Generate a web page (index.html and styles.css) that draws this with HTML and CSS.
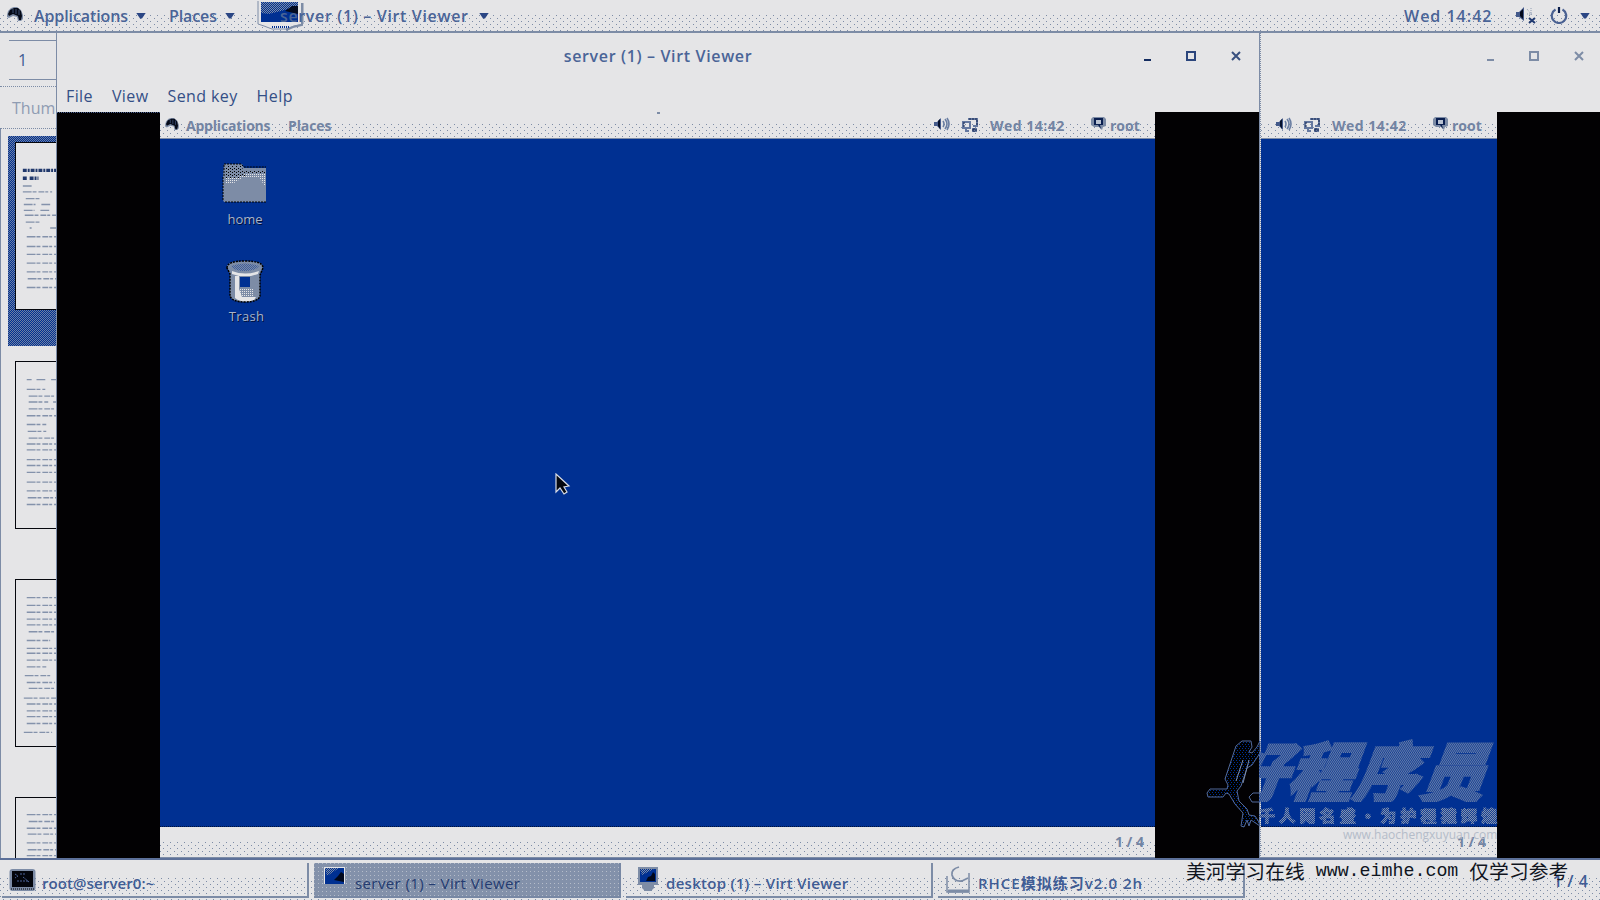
FILE: index.html
```html
<!DOCTYPE html>
<html lang="en">
<head>
<meta charset="utf-8">
<title>server (1) – Virt Viewer</title>
<link rel="stylesheet" href="styles.css">
</head>
<body>
<svg class="defs" width="0" height="0">
  <defs>
    <pattern id="weave" width="2" height="2" patternUnits="userSpaceOnUse"><rect width="2" height="2" fill="#003092"/><rect width="1" height="1" fill="#7d8ca6"/><rect x="1" y="1" width="1" height="1" fill="#7d8ca6"/></pattern>
    <pattern id="night" width="3" height="4" patternUnits="userSpaceOnUse"><rect width="3" height="4" fill="#000"/><rect width="1" height="1" fill="#003092"/><rect x="1" y="2" width="1" height="1" fill="#003092"/></pattern>
    <pattern id="frost" width="2" height="2" patternUnits="userSpaceOnUse"><rect width="1" height="1" fill="#e5e5e7"/></pattern>
    <pattern id="soot" width="4" height="3" patternUnits="userSpaceOnUse"><rect width="1" height="1" fill="#000"/><rect x="2" y="1" width="1" height="1" fill="#000"/></pattern>
    <symbol id="hat" viewBox="0 0 16 14"><path d="M0 8 1 4 4 1 7 0h3l4 3 2 5v4l-2 2h-3l-1-4-4-1-4 2-2-1z" fill="#7d8ca6"/><path d="M1 7 3 3 7 1h4l3 3 1 5-1 4h-2l-1-4-5-2-4 2z" fill="#050a18"/><path d="M6 2v4M9 2v5M12 3v5" stroke="#4a5f8a" stroke-width=".8"/></symbol>
    <symbol id="sound" viewBox="0 0 16 14"><path d="M0 5h3l4-4v12L3 9H0z" fill="#43598a"/><path d="M4 4l2-2v10L4 9z" fill="#05102c"/><path d="M9 4q2 3 0 6M11 2q4 5 0 10M13 1q4 6 0 12" fill="none" stroke="#6b7fa3" stroke-width="1.600"/></symbol>
    <symbol id="net" viewBox="0 0 17 15"><path d="M6 1h9v7h-4M1 4h7v6H1zM4 10v3h3" fill="none" stroke="#6478a0" stroke-width="2"/><path d="M10 10h5v4h-5z" fill="#6478a0"/><path d="M7 1h8v6M2 4v5M10 12h5M12 10v4" fill="none" stroke="#10234e" stroke-width="1" stroke-dasharray="2 1"/></symbol>
    <symbol id="chat" viewBox="0 0 15 13"><path d="M2 0h11l2 2v7l-3 1-1 3-3-3H3L0 8V2z" fill="#7d8ca6"/><path d="M3 1h9v7H9l1 4-3-4H3z" fill="#0a1f50"/><path d="M5 3h5v4H5z" fill="#b9c2d2"/></symbol>
    <symbol id="screen" viewBox="0 0 22 24"><path d="M1 0h20v18H1zM5 18h12v3l-3 3H8l-3-3z" fill="#7d8ca6"/><path d="M3 2h16v13H3z" fill="#003092"/><path d="M3 2h14L5 8z" fill="url(#weave)"/><path d="M9 14l2-4 3-1 2-4 2 2v7z" fill="#02081c"/></symbol>
  </defs>
</svg>

<header class="topbar grain">
  <svg class="hat"><use href="#hat"/></svg>
  <span class="t apps">Applications</span><i class="tri"></i>
  <span class="t places">Places</span><i class="tri"></i>
  <svg class="app-icon" viewBox="0 0 48 30"><path d="M1 0v23l6 2 8 3h14l8-3 9-2V2" fill="#e5e5e7" stroke="#7d8ca6"/><path d="M45 2v22l-9 2-7 3" fill="none" stroke="#7d8ca6" stroke-width="2"/><path d="M4 1h37v20H4z" fill="#003092"/><path d="M4 1h37v4L24 10 12 13 4 12z" fill="url(#weave)"/><path d="M28 10l7-5h6v8z" fill="#040b20"/><path d="M15 26h17" stroke="#003092" stroke-width="2" stroke-dasharray="1 1"/></svg>
  <span class="t task">server (1) – Virt Viewer</span><i class="tri"></i>
  <span class="t clock">Wed 14:42</span>
  <svg class="vol" viewBox="0 0 20 18"><path d="M0 5h3l5-5v14L3 10H0z" fill="#43598a"/><path d="M4 5l3-3v10L4 9z" fill="#02081c"/><path d="M11 2l5 6M15 1v8M11 7h6" stroke="#8e9bb2" stroke-dasharray="1 1"/><path d="M13 11l6 5M19 11l-6 5" stroke="#213a70" stroke-width="2"/></svg>
  <svg class="power" viewBox="0 0 18 18"><path d="M5.500 3.500a7.200 7.200 0 1 0 7 0" fill="none" stroke="#4a6192" stroke-width="2.200"/><path d="M9 1v6" stroke="#0b1e4c" stroke-width="2.200"/></svg>
  <i class="tri"></i>
</header>

<main class="desk">
  <aside class="side">
    <div class="pagebox"><span class="t">1</span></div>
    <div class="thumbhead"><span class="t">Thumbnails</span></div>
    <div class="thumbs">
      <div class="sel"><svg class="page" viewBox="0 0 42 168"><g class="ln"><path class="dk" d="M7 27h35M7 35h4m3 0h9"/><path d="M7 43h10M7 49h30M10 56h14M8 62h12m6 0h10M8 68h11m6 0h10M9 73h33M10 80h15M14 86h2m19 0h6M11 95h31M11 105h31M11 113h31M11 122h31M11 131h31M12 138h30M11 147h31"/></g></svg></div>
      <svg class="page" viewBox="0 0 42 168"><g class="ln"><path d="M11 17h5m5 0h10m5 0h6M11 27h19M13 34h29M13 40h20m5 0h4M13 47h29M11 54h31M11 63h20M12 70h19M13 77h29M11 83h31M11 89h31M11 99h31M11 105h31M11 112h31M11 122h31M11 131h31M12 138h30M11 145h31"/></g></svg>
      <svg class="page" viewBox="0 0 42 168"><g class="ln"><path d="M11 17h31M11 25h31M11 32h31M11 39h31M11 45h31M13 52h29M11 61h24M11 69h31M11 74h31M11 81h31M11 88h20M9 97h27M11 104h29M13 110h29M8 120h34M11 126h31M11 133h31M11 139h31M11 146h31M8 155h29"/></g></svg>
      <svg class="page" viewBox="0 0 42 168"><g class="ln"><path d="M11 16h31M13 23h29M11 30h31M12 36h30M11 45h31M12 52h30M11 58h31"/></g></svg>
    </div>
  </aside>

  <section class="win back">
    <div class="title"><div class="ctl"><i class="min"></i><i class="max"></i><svg class="x" viewBox="0 0 10 10"><path d="M1 1l8 8M9 1l-8 8"/></svg></div></div>
    <div class="guest">
      <div class="vm">
        <div class="gpanel grain"><svg class="gs"><use href="#sound"/></svg><svg class="gn"><use href="#net"/></svg><span class="t gt gclock">Wed 14:42</span><svg class="gc"><use href="#chat"/></svg><span class="t gt groot">root</span></div>
        <div class="wall"></div>
        <div class="gfoot grain"><span class="t gt">1 / 4</span></div>
      </div>
      <div class="void"></div>
    </div>
  </section>

  <section class="win front">
    <div class="title"><span class="t">server (1) – Virt Viewer</span><div class="ctl"><i class="min"></i><i class="max"></i><svg class="x" viewBox="0 0 10 10"><path d="M1 1l8 8M9 1l-8 8"/></svg></div></div>
    <nav class="menu"><span class="t">File</span><span class="t">View</span><span class="t">Send key</span><span class="t">Help</span><i class="nub"></i></nav>
    <div class="guest">
      <div class="void"></div>
      <div class="vm">
        <div class="gpanel grain"><svg class="gh"><use href="#hat"/></svg><span class="t gt gapps">Applications</span><span class="t gt gplaces">Places</span><svg class="gs"><use href="#sound"/></svg><svg class="gn"><use href="#net"/></svg><span class="t gt gclock">Wed 14:42</span><svg class="gc"><use href="#chat"/></svg><span class="t gt groot">root</span></div>
        <div class="wall">
          <div class="icon"><svg width="46" height="42" viewBox="0 0 46 42"><path d="M2 2h18l2 4h22v34H2L1 38V15z" fill="#7d8ca6"/><path d="M3 4h16l3 5h21v4H26L14 17H3z" fill="url(#soot)"/><path d="M3 16h10l10-4h20v12l-6-8H20l-8 5H3z" fill="url(#frost)"/><path d="M2 14V2h17l3 3h22M3 40h41M1 15v23" fill="none" stroke="#000" stroke-dasharray="2 1"/></svg><span>home</span></div>
          <div class="icon trash"><svg width="38" height="45" viewBox="0 0 38 45"><path d="M1 8q0-6 18-6t18 6l-3 7v22q-2 6-15 6T4 37V15z" fill="#7d8ca6"/><path d="M5 7q14-5 28 0-3 5-14 5T5 7z" fill="url(#weave)" opacity=".5"/><path d="M6 12q13 5 27 0l-1 3-7 2H13l-7-2zM9 17h4v13l3 8h14l-2 3q-8 3-16 0l-3-2z" fill="#e5e5e7"/><path d="M14 18h10v10H14z" fill="#003092"/><path d="M14 30h14v8H14z" fill="url(#frost)"/><path d="M1 9q0-7 18-7t18 7l-3 7v21q-2 6-15 6T4 37V15z" fill="none" stroke="#000" stroke-width="1.500" stroke-dasharray="2 1"/></svg><span>Trash</span></div>
          <svg class="cursor" viewBox="0 0 16 22"><path d="M1 1v18l4-4 4 6 3-2-3-5 5-1z" fill="#05080f" stroke="#d9dce4" stroke-width="1.200"/></svg>
        </div>
        <div class="gfoot grain"><span class="t gt">1 / 4</span></div>
      </div>
      <div class="void"></div>
    </div>
  </section>

  <div class="brand">
    <svg class="runner" viewBox="0 0 56 90"><path d="M36 1h9l1 6-3 5 3 1 5-6 3-6v12l-8 12-5 3-6 18-4 5 2 10 8 8 2 6 6 1 4 6 1 4-9-6-2 6-2-6-3 7-3-1 2-13-8-9-6-10-3-1-3 4H2l-1-4 3-4h17l1-4-3-6 6-18 5-15z" fill="url(#night)" stroke="#51699a"/><path d="M37 20l-7 21M43 20l-6 23" stroke="#7d8ca6"/><path d="M55 53h-8l-4 4 3 5h9" fill="none" stroke="#51699a"/></svg>
    <div class="brandclip"><div class="big">好程序员</div><div class="small">千人网名盛·为护程猿辉煌</div></div>
    <div class="site">www.haochengxuyuan.com</div>
  </div>
</main>

<footer class="taskbar grain">
  <div class="tb"><svg class="term" viewBox="0 0 27 24"><rect x=".5" y="1" width="26" height="22" rx="3" fill="#7d8ca6"/><rect x="3" y="3" width="21" height="16" fill="#03050c"/><path d="M6 6l3 2-3 2M11 6h5M8 13h12M14 9l6 5" stroke="#4d6599" fill="none" stroke-dasharray="2 1"/><path d="M2 21h23" stroke="#000" stroke-dasharray="1 1"/></svg><span class="t l1">root@server0:~</span></div>
  <div class="tb active"><svg class="scr" viewBox="0 0 22 24"><path d="M0 0h21v17H0z" fill="#e5e5e7"/><path d="M1 1h19v16H1z" fill="#003092"/><path d="M1 1h14L3 9z" fill="url(#weave)"/><path d="M10 13l4-4 3-4 3 2v8z" fill="#02081c"/></svg><span class="t l2">server (1) – Virt Viewer</span></div>
  <div class="tb"><svg class="scr"><use href="#screen"/></svg><span class="t l3">desktop (1) – Virt Viewer</span></div>
  <div class="tb"><svg class="doc" viewBox="0 0 25 28"><path d="M1 10v16h22V7" fill="none" stroke="#7d8ca6" stroke-width="1.500"/><path d="M2 25h21" stroke="#7d8ca6" stroke-width="3"/><path d="M13 1q-8 2-7 8 2 7 10 6l6-3" fill="none" stroke="#7d8ca6" stroke-width="1.800"/></svg><span class="t l4">RHCE模拟练习v2.0 2h</span></div>
  <span class="t pager">1 / 4</span>
  <div class="stamp"><span>美河学习在线</span><b>www.eimhe.com</b><span>仅学习参考</span></div>
</footer>
</body>
</html>
```

FILE: styles.css
```css
* { box-sizing: border-box; }
body {
  --paper: #e5e5e7;
  --steel: #7d8ca6;
  --navy: #003092;
  margin: 0;
  width: 1600px;
  height: 900px;
  overflow: hidden;
  display: flex;
  flex-direction: column;
  background: var(--paper);
  font-family: "Open Sans", "Noto Sans CJK SC", sans-serif;
  font-size: 16px;
}
.defs { position: absolute; }
svg { flex: none; display: block; }
.t { color: #405c94; font-weight: 500; line-height: 20px; white-space: nowrap; flex: none; }

/* sparse speckle along the lower half of bars */
.grain {
  background-color: var(--paper);
  background-image:
    linear-gradient(var(--paper) 45%, transparent 45%),
    conic-gradient(at 1px 1px, transparent 75%, var(--steel) 0),
    conic-gradient(at 1px 1px, transparent 75%, var(--steel) 0);
  background-size: 100% 100%, 7px 6px, 7px 6px;
  background-position: 0 0, 0 0, 3px 3px;
}
.tri { flex: none; width: 10px; height: 6px; background: #2b4684; clip-path: polygon(0 0, 100% 0, 60% 100%, 40% 100%); }

.topbar { height: 33px; border-bottom: 2px solid var(--steel); display: flex; align-items: center; padding: 0 10px 0 7px; flex: none; }
.topbar .t { font-weight: 600; color: #4a6497; }
.hat { width: 16px; height: 14px; margin-top: -4px; }
.topbar .apps { margin-left: 11px; width: 102px; letter-spacing: -.1px; }
.topbar .places { margin-left: 23px; width: 56px; letter-spacing: -.1px; }
.app-icon { width: 48px; height: 30px; margin: 1px 0 0 22px; }
.topbar .task { margin-left: -25px; width: 199px; letter-spacing: .65px; }
.topbar .clock { margin-left: auto; width: 112px; letter-spacing: 1px; }
.vol { width: 20px; height: 18px; margin-right: 14px; }
.power { width: 18px; height: 18px; margin: -2px 12px 0 0; }

.desk { position: relative; height: 825px; flex: none; display: flex; }
.side { width: 57px; border-right: 1px solid var(--steel); display: flex; flex-direction: column; overflow: hidden; }
.pagebox { height: 40px; margin: 7px 0 0 9px; border-top: 1px solid var(--steel); border-bottom: 1px solid var(--steel); padding: 8px 0 0 9px; }
.thumbhead { height: 43px; margin-top: 6px; border-top: 1px dotted var(--steel); border-bottom: 1px dotted var(--steel); padding: 10px 0 0 12px; }
.thumbhead .t { color: #8f9cb3; font-weight: 400; }
.thumbs { flex: 1; border-left: 1px solid var(--steel); padding: 7px 0 0 7px; overflow: hidden; }
.sel { height: 210px; padding: 6px 0 0; margin-bottom: 15px; background: repeating-conic-gradient(var(--navy) 0 25%, #6f80a3 0 50%) 0 0 / 2px 2px; }
.page { width: 42px; height: 168px; margin: 0 0 50px 7px; background: #e5e5e7; border: 1px solid #05070d; border-right: 0; }
.ln path { stroke: #8492ab; stroke-width: 1.4; stroke-dasharray: 9 1 4 2 6 1 3 2; fill: none; }
.ln .dk { stroke: #20386c; stroke-width: 3.5; stroke-dasharray: 4 1 2 1; }

/* free-floating windows */
.win { position: absolute; top: 0; height: 825px; background: var(--paper); display: flex; flex-direction: column; }
.front { left: 57px; width: 1203px; border-right: 1px solid var(--steel); }
.back { left: 1260px; width: 340px; border-left: 1px dotted var(--steel); }
.title { height: 45px; flex: none; display: flex; justify-content: center; padding-top: 13px; position: relative; }
.front .title .t { letter-spacing: .65px; font-weight: 600; color: #4a6497; }
.ctl { position: absolute; top: 18px; right: 16px; display: flex; gap: 35px; height: 10px; }
.front .ctl { right: 18px; }
.ctl .min { width: 7px; height: 2px; margin-top: 8px; background: #142c60; }
.ctl .max { width: 10px; height: 10px; border: 2px solid #2b457c; }
.ctl .x { width: 10px; height: 10px; }
.ctl .x path { stroke: #38507f; stroke-width: 2; }
.back .min { background: var(--steel); }
.back .max { border-color: var(--steel); }
.back .x path { stroke: var(--steel); }
.menu { height: 34px; flex: none; display: flex; padding: 8px 0 0 9px; gap: 19px; position: relative; }
.menu .t { letter-spacing: .4px; color: #344f86; }
.nub { position: absolute; left: 600px; top: 34px; width: 3px; height: 2px; background: var(--steel); z-index: 2; }
.guest { flex: 1; display: flex; }
.back .guest { margin-top: 34px; }
.void { width: 103px; background: #020103; flex: none; }
.front .void:last-child { width: 104px; }
.front .void:first-child { border-top: 1px dotted #4c6393; }
.vm { flex: 1; display: flex; flex-direction: column; min-width: 0; }
.gpanel { height: 27px; flex: none; display: flex; align-items: center; border-bottom: 1px solid var(--steel); }
.gt { font-size: 14px; font-weight: 700; color: #7384a3; }
.gpanel .t { margin-top: 2px; }
.gh { width: 14px; height: 12px; margin: -3px 7px 0 5px; }
.gapps { width: 102px; letter-spacing: -.2px; }
.gplaces { letter-spacing: -.1px; }
.gs { width: 16px; height: 14px; margin: -2px 0 0 auto; }
.gn { width: 17px; height: 15px; margin-left: 12px; }
.gclock { margin-left: 11px; width: 79px; letter-spacing: .5px; }
.gc { width: 15px; height: 13px; margin: -3px 0 0 22px; }
.groot { margin-left: 4px; width: 45px; letter-spacing: 0; }
.wall { flex: 1; background: var(--navy); position: relative; padding: 23px 0 0 60px; border-bottom: 1px dotted #001238; }
.gfoot { height: 31px; flex: none; display: flex; justify-content: flex-end; align-items: center; padding-right: 11px; border-bottom: 1px solid var(--steel); }
.icon { width: 50px; display: flex; flex-direction: column; align-items: center; height: 97px; }
.icon span { color: #a9b4ca; font-size: 13px; line-height: 16px; margin-top: 7px; text-shadow: 1px 1px 0 #00103c; }
.trash span { margin: 4px 0 0 3px; letter-spacing: .3px; }
.cursor { position: absolute; left: 395px; top: 334px; width: 16px; height: 22px; }

.brand { position: absolute; left: 1206px; top: 707px; width: 292px; height: 104px; }
.runner { position: absolute; left: 0; top: 0; width: 56px; height: 90px; }
.brandclip { position: absolute; left: 53px; top: -4px; width: 239px; height: 91px; overflow: hidden; }
.big, .small { color: transparent; background: repeating-conic-gradient(#8694ad 0 25%, #143f96 0 50%) 0 0 / 2px 2px; -webkit-background-clip: text; background-clip: text; white-space: nowrap; font-family: "Noto Sans CJK SC", sans-serif; font-weight: 900; }
.big { width: 290px; margin-left: -29px; font-size: 65px; line-height: 66px; letter-spacing: 1px; transform: skewX(-20deg); -webkit-text-stroke: 3px transparent; }
.small { width: 260px; margin: 4px 0 0 0; font-size: 16px; line-height: 18px; letter-spacing: 4.2px; -webkit-text-stroke: 1px transparent; }
.site { position: absolute; left: 137px; top: 88px; width: 155px; height: 14px; color: #b4bcc9; font-size: 12px; line-height: 14px; }

.taskbar { position: relative; height: 42px; flex: none; border-top: 2px solid #5c7099; display: flex; padding: 3px 0 2px 2px; gap: 5px; }
.tb { width: 307px; height: 35px; border-right: 2px solid var(--steel); border-bottom: 2px solid var(--steel); display: flex; align-items: center; padding-left: 7px; flex: none; }
.tb .t { margin-top: 6px; }
.active { background-color: #8391aa; background-image: conic-gradient(at 1px 1px, transparent 75%, #b5bcc9 0); background-size: 4px 4px; border-color: #7888a4; }
.term { width: 27px; height: 24px; }
.scr { width: 22px; height: 24px; margin: -2px 0 0 4px; }
.active .scr { margin-left: 3px; }
.doc { width: 25px; height: 28px; margin-left: 1px; }
.l1 { margin-left: 6px; font-weight: 600; font-size: 15px; letter-spacing: .1px; }
.active .l2 { margin-left: 9px; color: #233b70; font-size: 15px; letter-spacing: .4px; }
.l3 { margin-left: 7px; letter-spacing: .3px; font-weight: 600; font-size: 15px; }
.l4 { margin-left: 7px; font-weight: 600; font-size: 15px; letter-spacing: 1px; }
.pager { position: absolute; left: 1553px; top: 11px; font-weight: 600; letter-spacing: .5px; }
.stamp { position: absolute; left: 1186px; top: -2px; display: flex; align-items: center; height: 26px; color: #10151f; font: 19.8px/26px "Noto Sans CJK SC", sans-serif; white-space: nowrap; }
.stamp b { font: 400 18.3px/26px "Liberation Mono", monospace; margin: 0 11px; }
```
